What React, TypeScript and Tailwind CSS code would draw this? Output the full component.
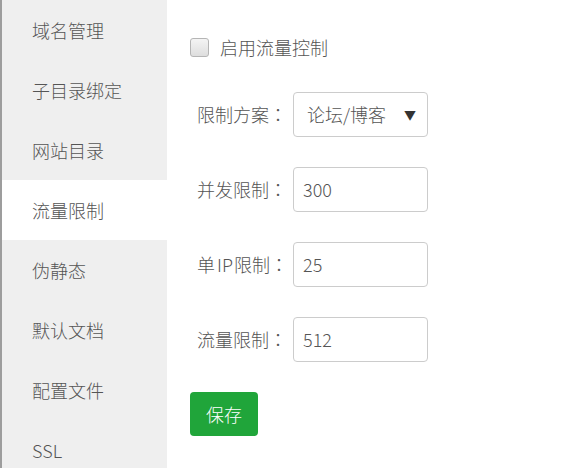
import React from "react";

const items = ["域名管理", "子目录绑定", "网站目录", "流量限制", "伪静态", "默认文档", "配置文件", "SSL"];

function Colon() {
  return (
    <span className="inline-block w-[18px] text-center" style={{ fontFamily: '"Noto Sans CJK TC", sans-serif' }}>
      ：
    </span>
  );
}

function Row({ label, children }: { label: React.ReactNode; children: React.ReactNode }) {
  return (
    <div className="flex items-center h-[45px]">
      <div className="w-[103px] pl-[7px] text-[18px] text-[#555] whitespace-nowrap flex items-center">
        <span>{label}</span>
        <Colon />
      </div>
      {children}
    </div>
  );
}

export default function App() {
  const font = { fontFamily: '"Noto Sans CJK SC", "Noto Sans", sans-serif' };
  return (
    <div className="flex w-[567px] h-[468px] bg-white overflow-hidden font-light" style={font}>
      <div className="w-[2px] bg-[#9d9d9d] shrink-0" />
      <div className="w-[165px] shrink-0 bg-[#efefef] flex flex-col">
        {items.map((t, i) => (
          <div
            key={t}
            className={
              i === 3
                ? "h-[60px] shrink-0 flex items-center pl-[30px] text-[18px] text-[#555] bg-white"
                : "h-[60px] shrink-0 flex items-center pl-[30px] text-[18px] text-[#555]"
            }
          >
            {t}
          </div>
        ))}
      </div>
      <div className="flex-1 pl-[23px] pt-[37px] flex flex-col">
        <div className="flex items-center h-[20px]">
          <div className="w-[19px] h-[19px] rounded-[3px] border border-[#b5b5b5] bg-gradient-to-b from-[#f4f4f4] to-[#dedede]" />
          <span className="ml-[11px] text-[18px] text-[#555]">启用流量控制</span>
        </div>
        <div className="mt-[35px] flex flex-col gap-[30px]">
          <Row label="限制方案">
            <div className="w-[135px] h-[45px] border border-[#ccc] rounded-[4px] flex items-center pl-[13px] pr-[11px] justify-between text-[18px] text-[#555]">
              <span>论坛/博客</span>
              <span className="text-[12px] text-[#333]">▼</span>
            </div>
          </Row>
          <Row label="并发限制">
            <div className="w-[135px] h-[45px] border border-[#ccc] rounded-[4px] flex items-center pl-[9px] text-[18px] text-[#555]">300</div>
          </Row>
          <Row
            label={
              <>
                单<span className="inline-block w-[19px] pl-[2px]">IP</span>限制
              </>
            }
          >
            <div className="w-[135px] h-[45px] border border-[#ccc] rounded-[4px] flex items-center pl-[9px] text-[18px] text-[#555]">25</div>
          </Row>
          <Row label="流量限制">
            <div className="w-[135px] h-[45px] border border-[#ccc] rounded-[4px] flex items-center pl-[9px] text-[18px] text-[#555]">512</div>
          </Row>
        </div>
        <div className="mt-[30px]">
          <div className="w-[68px] h-[44px] rounded-[4px] bg-[#20a53a] text-white text-[18px] flex items-center justify-center">保存</div>
        </div>
      </div>
    </div>
  );
}
